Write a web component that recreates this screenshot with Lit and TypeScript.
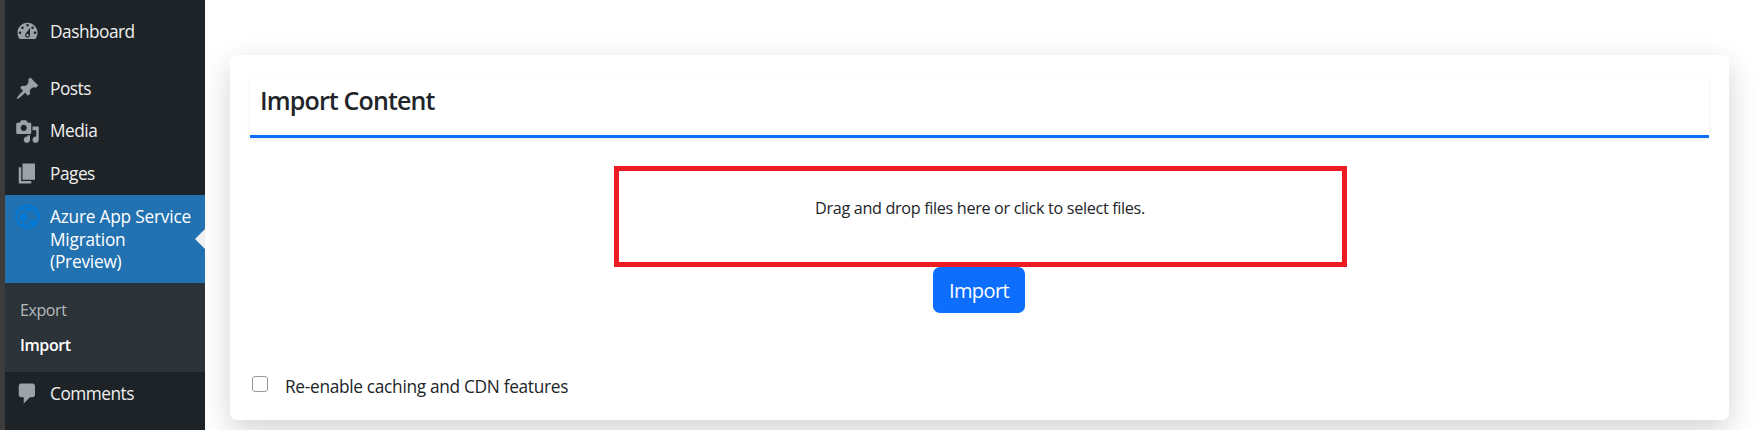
import { LitElement, html, css, svg } from "lit";
import { customElement } from "lit/decorators.js";

const icons: Record<string, string> = {
  dashboard:
    "M3.76 16h12.48c1.1-1.37 1.76-3.11 1.76-5 0-4.42-3.58-8-8-8s-8 3.58-8 8c0 1.89.66 3.63 1.76 5zM10 4c.55 0 1 .45 1 1s-.45 1-1 1-1-.45-1-1 .45-1 1-1zM6 6c.55 0 1 .45 1 1s-.45 1-1 1-1-.45-1-1 .45-1 1-1zm8 0c.55 0 1 .45 1 1s-.45 1-1 1-1-.45-1-1 .45-1 1-1zm-5.37 5.55L12 7v6c0 1.1-.9 2-2 2s-2-.9-2-2c0-.57.24-1.08.63-1.45zM4 10c.55 0 1 .45 1 1s-.45 1-1 1-1-.45-1-1 .45-1 1-1zm12 0c.55 0 1 .45 1 1s-.45 1-1 1-1-.45-1-1 .45-1 1-1zm-5 3c0-.55-.45-1-1-1s-1 .45-1 1 .45 1 1 1 1-.45 1-1z",
  posts:
    "M10.44 3.02l1.82-1.82 6.36 6.35-1.83 1.82c-1.05-.68-2.48-.57-3.41.36l-.75.75c-.92.93-1.04 2.35-.35 3.41l-1.83 1.82-2.41-2.41-2.8 2.79c-.42.42-3.38 2.71-3.8 2.29s1.86-3.39 2.28-3.81l2.79-2.79L4.1 9.36l1.83-1.82c1.05.69 2.48.57 3.4-.36l.75-.75c.93-.92 1.05-2.35.36-3.41z",
  media:
    "M13 11V4c0-.55-.45-1-1-1h-1.67L9 1H5L3.67 3H2c-.55 0-1 .45-1 1v7c0 .55.45 1 1 1h10c.55 0 1-.45 1-1zM7 4.5c1.38 0 2.5 1.12 2.5 2.5S8.38 9.5 7 9.5 4.5 8.38 4.5 7 5.62 4.5 7 4.5zM14 6h5v10.5c0 1.38-1.12 2.5-2.5 2.5S14 17.88 14 16.5s1.12-2.5 2.5-2.5c.17 0 .34.02.5.05V9h-3V6zm-4 8.05V13h2v3.5c0 1.38-1.12 2.5-2.5 2.5S7 17.88 7 16.5 8.12 14 9.5 14c.17 0 .34.02.5.05z",
  pages: "M6 15V2h10v13H6zm-1 1h8v2H3V5h2v11z",
  comments: "M5 2h9c1.1 0 2 .9 2 2v7c0 1.1-.9 2-2 2h-2l-5 5v-5H5c-1.1 0-2-.9-2-2V4c0-1.1.9-2 2-2z",
};

const azureIcon = svg`
  <circle cx="12.5" cy="12.5" r="11.4" fill="none" stroke="#0078d7" stroke-width="1.9"/>
  <g fill="none" stroke="#0078d7" stroke-width="1.3">
    <path d="M8 13 14 4M8 13 18 19M8 13 8 21M14 4 5 5.5M14 4C19 5 22 9 22.5 13M18 19 8 21"/>
  </g>
  <g fill="#0078d7">
    <circle cx="8" cy="13" r="3.7"/><circle cx="14.2" cy="5" r="2.2"/>
    <circle cx="18" cy="18.6" r="2.6"/><circle cx="8" cy="21" r="1.7"/>
  </g>`;

@customElement("side-menu")
export class SideMenu extends LitElement {
  static styles = css`
    :host { display: block; width: 200px; height: 430px; background: #1d2327; color: #f0f0f1; }
    .menu { padding-top: 10.5px; }
    .item { display: grid; grid-template-columns: 45px 1fr; height: 42.5px; font-size: 17.3px; line-height: 42.5px; letter-spacing: -0.5px; white-space: nowrap; }
    .icon { display: block; width: 25px; height: 25px; margin: 8.5px 0 0 10px; fill: #9ca2a7; }
    .gap { height: 14.5px; }
    .current { position: relative; height: 88px; background: #2271b1; color: #fff; line-height: 22.6px; letter-spacing: -0.22px; }
    .current .label { padding-top: 11px; }
    .arrow { position: absolute; right: 0; top: 34px; width: 10px; height: 20px; background: #f0f0f1; clip-path: polygon(100% 0, 0 50%, 100% 100%); }
    .sub { box-sizing: border-box; height: 89px; padding: 10px 0 0 15px; background: #2c3338; font-size: 16px; line-height: 35px; letter-spacing: -0.4px; }
    .link { color: #b4b9be; }
    .active { color: #fff; font-weight: 600; }
    .comments { line-height: 44px; }
  `;
  item(key: string, label: string) {
    return html`<div class="item ${key}"><svg class="icon" viewBox="0 0 20 20"><path d=${icons[key]} /></svg><span>${label}</span></div>`;
  }
  render() {
    return html`<nav class="menu">
      ${this.item("dashboard", "Dashboard")}
      <div class="gap"></div>
      ${this.item("posts", "Posts")}${this.item("media", "Media")}${this.item("pages", "Pages")}
      <div class="item current">
        <svg class="icon" viewBox="0 0 25 25">${azureIcon}</svg>
        <span class="label">Azure App Service<br />Migration<br />(Preview)</span>
        <i class="arrow"></i>
      </div>
      <div class="sub"><div class="link">Export</div><div class="active">Import</div></div>
      ${this.item("comments", "Comments")}
    </nav>`;
  }
}

@customElement("import-card")
export class ImportCard extends LitElement {
  static styles = css`
    :host { display: block; box-sizing: border-box; width: 1499px; height: 365px; margin: 55px 0 0 25px; padding: 20px; border-radius: 7px; background: #fff; box-shadow: 0 10px 30px rgba(0, 0, 0, 0.175); color: #212529; white-space: nowrap; }
    .head { box-sizing: border-box; height: 63px; padding-left: 10px; border-bottom: 3px solid #0d6efd; box-shadow: 0 2px 5px rgba(0, 0, 0, 0.075); font-size: 25px; font-weight: 600; line-height: 51px; letter-spacing: -0.85px; }
    .body { display: grid; justify-items: center; padding-top: 28px; }
    .drop { box-sizing: border-box; width: 733px; height: 101px; margin-left: 1px; padding-top: 21px; border: 5px solid #ed1c24; text-align: center; font-size: 16.2px; line-height: 32px; letter-spacing: -0.33px; }
    .btn { box-sizing: border-box; width: 92px; height: 46px; margin-right: 1px; padding: 0; border: 0; border-radius: 7px; background: #0d6efd; color: #fff; font: inherit; font-size: 20px; line-height: 48px; letter-spacing: -0.6px; }
    .check { display: flex; align-items: center; height: 24px; margin-top: 61px; padding-left: 2px; font-size: 17.3px; letter-spacing: -0.31px; }
    .box { box-sizing: border-box; width: 16px; height: 16px; margin: 0 17px 4px 0; border: 1px solid #999; border-radius: 3px; background: #fff; }
  `;
  render() {
    return html`
      <div class="head">Import Content</div>
      <div class="body">
        <div class="drop">Drag and drop files here or click to select files.</div>
        <button class="btn">Import</button>
      </div>
      <div class="check"><span class="box"></span><span class="text">Re-enable caching and CDN features</span></div>
    `;
  }
}

@customElement("app-root")
export class AppRoot extends LitElement {
  static styles = css`
    :host { display: flex; align-items: flex-start; box-sizing: border-box; width: 1757px; height: 430px; overflow: hidden; background: #fff; border-left: 5px solid #3c3c3c; font-family: "Open Sans", "Noto Sans", sans-serif; }
    .side { position: relative; flex: none; z-index: 1; }
    .card { flex: none; }
  `;
  render() {
    return html`<side-menu class="side"></side-menu><import-card class="card"></import-card>`;
  }
}
